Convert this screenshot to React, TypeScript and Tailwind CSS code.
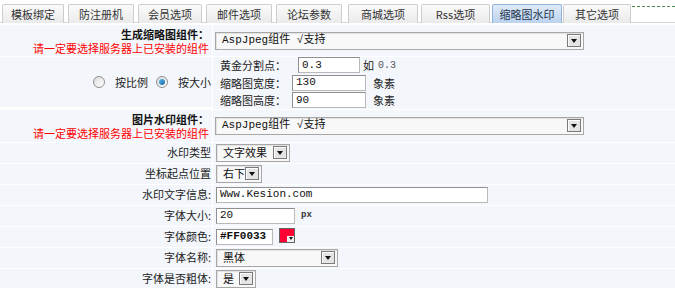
import React from 'react';

const TABS = [
  { label: '模板绑定', w: 'w-[62px]', ml: 'ml-[2px]' },
  { label: '防注册机', w: 'w-[66px]', ml: 'ml-[4px]' },
  { label: '会员选项', w: 'w-[64px]', ml: 'ml-[4px]' },
  { label: '邮件选项', w: 'w-[66px]', ml: 'ml-[4px]' },
  { label: '论坛参数', w: 'w-[66px]', ml: 'ml-[4px]' },
  { label: '商城选项', w: 'w-[70px]', ml: 'ml-[6px]' },
  { label: 'Rss选项', w: 'w-[69px]', ml: 'ml-[3px]' },
  { label: '缩略图水印', w: 'w-[70px]', ml: 'ml-[2px]', active: true },
  { label: '其它选项', w: 'w-[68px]', ml: 'ml-[1px]' },
];

const cjk = "font-['Noto_Sans_CJK_SC','Noto_Sans',sans-serif]";
const mono = "font-['Liberation_Mono','Noto_Sans_CJK_SC',monospace]";

function DropBtn() {
  return (
    <span className="ml-auto mr-[2px] flex h-[13px] w-[14px] items-center justify-center border border-[#7a7a7a] bg-[#e4e4e4] shadow-[inset_1px_1px_0_#fff]">
      <span className="h-0 w-0 border-x-[3px] border-t-[4px] border-x-transparent border-t-[#111]" />
    </span>
  );
}

function Select({ w, text, isMono }: { w: string; text: string; isMono?: boolean }) {
  return (
    <div className={`flex h-[18px] items-center border border-[#a7a7a7] bg-[#f8f8f8] shadow-[inset_1px_1px_0_#e2e2e2] ${w}`}>
      <span className={`pl-[6px] text-[11px] leading-none text-[#111] ${isMono ? mono : cjk}`}>{text}</span>
      <DropBtn />
    </div>
  );
}

function Input({ w, value, bold }: { w: string; value: string; bold?: boolean }) {
  return (
    <div className={`flex h-[16px] items-center border border-[#b9b9b9] border-l-[#8f8f8f] border-t-[#8f8f8f] bg-white pl-[3px] ${w}`}>
      <span className={`text-[11px] leading-none text-[#111] ${mono} ${bold ? 'font-bold' : ''}`}>{value}</span>
    </div>
  );
}

function Radio({ checked }: { checked?: boolean }) {
  return (
    <span className="flex h-[12px] w-[12px] items-center justify-center rounded-full border border-[#8e8f8f] bg-gradient-to-br from-[#dcdcdc] to-[#ffffff]">
      {checked && <span className="h-[6px] w-[6px] rounded-full bg-gradient-to-br from-[#57b3e8] to-[#1d6fa8]" />}
    </span>
  );
}

function ComponentRow({ title }: { title: string }) {
  return (
    <>
      <div className={`flex flex-col items-end justify-center bg-[#f3f6fb] pr-[3px] text-[11px] leading-[14px] ${cjk}`}>
        <span className="font-bold text-[#111]">{title}</span>
        <span className="text-[#ff0000]">请一定要选择服务器上已安装的组件</span>
      </div>
      <div className="flex items-center bg-[#f3f6fb] pl-[2px]">
        <Select w="w-[369px]" text="AspJpeg组件 √支持" isMono />
      </div>
    </>
  );
}

function Row({ label, children }: { label: string; children: React.ReactNode }) {
  return (
    <>
      <div className={`flex h-[20px] items-center justify-end bg-[#f3f6fb] pr-[1px] text-[11px] text-[#222] ${cjk}`}>{label}</div>
      <div className="flex h-[20px] items-center bg-[#f3f6fb] pl-[3px]">{children}</div>
    </>
  );
}

export default function App() {
  return (
    <div className={`h-[288px] w-[675px] overflow-hidden bg-white ${cjk}`}>
      <div className="flex h-[23px] items-start border-b border-[#d6d6d6] pt-[4px]">
        {TABS.map((t) => (
          <div
            key={t.label}
            className={`flex h-[19px] items-center justify-center rounded-t-[2px] border border-b-0 text-[11px] ${t.w} ${t.ml} ${
              t.active
                ? 'border-[#8fb3dc] bg-gradient-to-b from-[#dfeaf7] to-[#bcd3ee] text-[#1f3550]'
                : 'border-[#cdcdcd] bg-gradient-to-b from-[#fbfbfb] to-[#eaeaea] text-[#333]'
            }`}
          >
            {t.label}
          </div>
        ))}
        <div className="ml-[1px] mt-[2px] h-px flex-1 bg-[repeating-linear-gradient(90deg,#4d8a4d_0_3px,transparent_3px_5px)]" />
      </div>
      <div className="mt-[2px] grid grid-cols-[212px_1fr] gap-px border-b border-[#e2e6ec] bg-white">
        <div className="col-span-2 grid h-[31px] grid-cols-subgrid gap-px">
          <ComponentRow title="生成缩略图组件：" />
        </div>
        <div className="flex h-[50px] items-center justify-end bg-[#f3f6fb] pr-[1px] text-[11px] text-[#222]">
          <Radio />
          <span className="ml-[10px]">按比例</span>
          <span className="ml-[8px]">
            <Radio checked />
          </span>
          <span className="ml-[10px]">按大小</span>
        </div>
        <div className="flex flex-col justify-center gap-[1px] bg-[#f3f6fb] pl-[7px] text-[11px] text-[#222]">
          <div className="flex items-center">
            <span className="w-[78px]">黄金分割点：</span>
            <Input w="w-[62px]" value=" 0.3" />
            <span className="ml-[3px]">如</span>
            <span className={`ml-[4px] text-[10px] text-[#555] ${mono}`}>0.3</span>
          </div>
          <div className="flex items-center">
            <span className="w-[72px]">缩略图宽度：</span>
            <Input w="w-[74px]" value="130" />
            <span className="ml-[7px]">象素</span>
          </div>
          <div className="flex items-center">
            <span className="w-[72px]">缩略图高度：</span>
            <Input w="w-[74px]" value="90" />
            <span className="ml-[7px]">象素</span>
          </div>
        </div>
        <div className="col-span-2 grid h-[32px] grid-cols-subgrid gap-px">
          <ComponentRow title="图片水印组件：" />
        </div>
        <Row label="水印类型">
          <Select w="w-[74px]" text="文字效果" />
        </Row>
        <Row label="坐标起点位置">
          <Select w="w-[46px]" text="右下" />
        </Row>
        <Row label="水印文字信息:">
          <Input w="w-[272px]" value="Www.Kesion.com" />
        </Row>
        <Row label="字体大小:">
          <Input w="w-[79px]" value="20" />
          <span className={`ml-[6px] text-[9px] font-bold text-[#333] ${mono}`}>px</span>
        </Row>
        <Row label="字体颜色:">
          <Input w="w-[57px]" value="#FF0033" bold />
          <span className="relative ml-[6px] -mt-[3px] h-[15px] w-[16px] border border-[#666] bg-[#ff0033]">
            <span className="absolute bottom-0 right-0 flex h-[6px] w-[7px] items-center justify-center bg-[#eee]">
              <span className="h-0 w-0 border-x-[2px] border-t-[3px] border-x-transparent border-t-[#111]" />
            </span>
          </span>
        </Row>
        <Row label="字体名称:">
          <Select w="w-[122px]" text="黑体" />
        </Row>
        <Row label="字体是否粗体:">
          <Select w="w-[40px]" text="是" />
        </Row>
      </div>
    </div>
  );
}
